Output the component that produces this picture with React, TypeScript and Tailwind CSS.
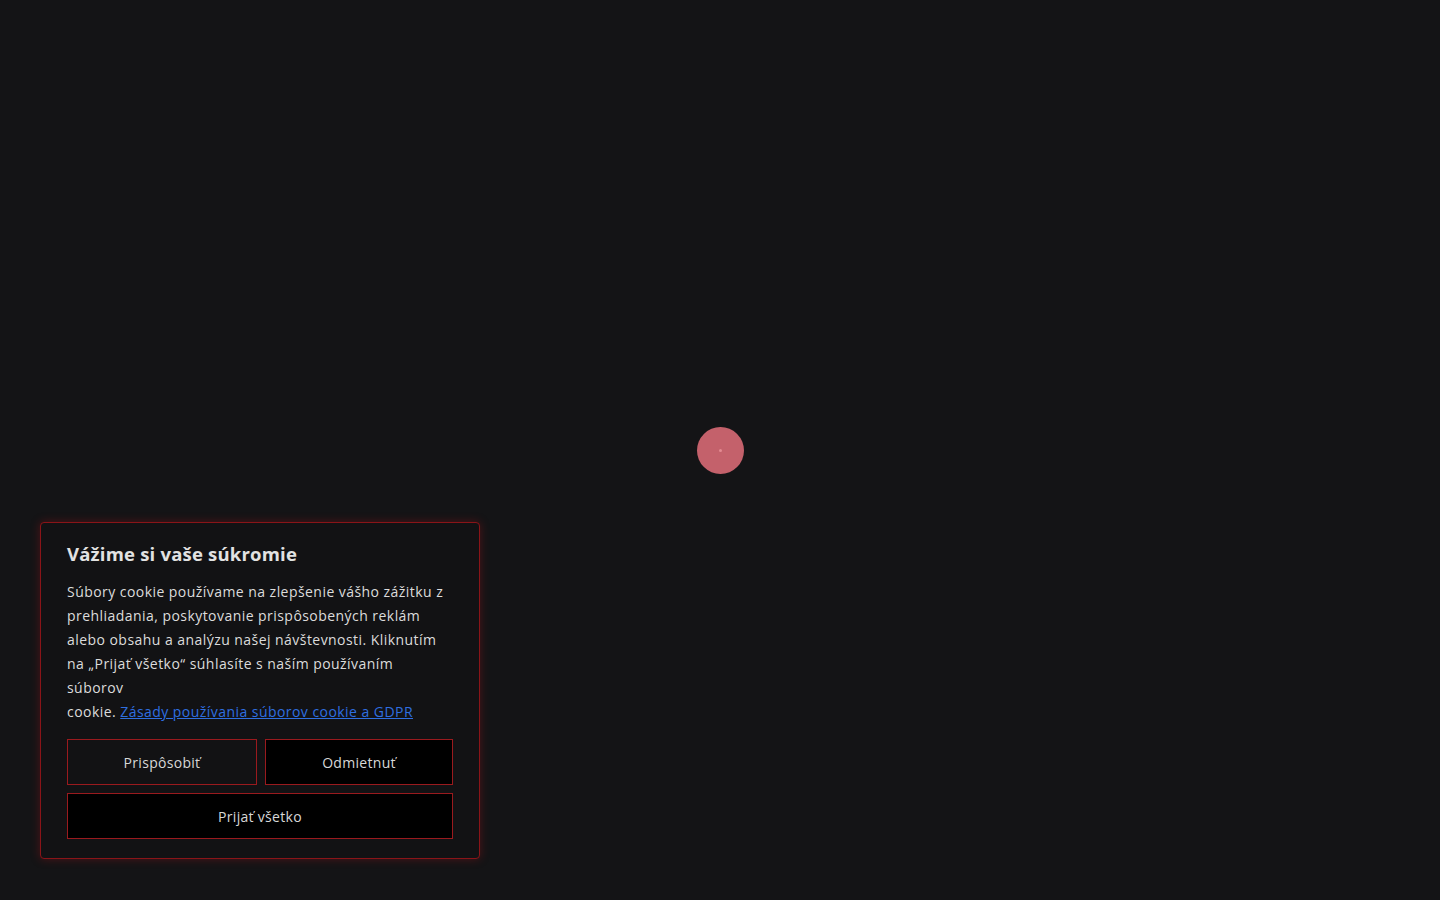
import React from 'react';

const bodyLines = [
  'Súbory cookie používame na zlepšenie vášho zážitku z',
  'prehliadania, poskytovanie prispôsobených reklám',
  'alebo obsahu a analýzu našej návštevnosti. Kliknutím',
  'na „Prijať všetko“ súhlasíte s naším používaním',
  'súborov',
];

function Spinner() {
  return (
    <div className="w-[47px] h-[47px] rounded-full bg-[#c4616b] flex items-center justify-center">
      <div className="w-[3px] h-[3px] rounded-full bg-[#e48a92]" />
    </div>
  );
}

function CookieBanner() {
  return (
    <div className="w-[440px] rounded-[4px] border border-[#8a1418] bg-[#121214] px-[26px] pt-[17px] pb-[19px] shadow-[0_0_10px_rgba(150,20,25,0.45)]">
      <h2 className="text-[18.5px] leading-[28px] font-bold text-[#e2e2e2] tracking-[0.2px]">Vážime si vaše súkromie</h2>
      <p className="mt-[12px] text-[14px] leading-[24px] text-[#dcdcdc] tracking-[0.45px]">
        {bodyLines.map((line) => (
          <span key={line} className="block whitespace-nowrap">
            {line}
          </span>
        ))}
        <span className="block whitespace-nowrap">
          cookie.{' '}
          <a href="#" className="text-[#2f6fe0] underline">
            Zásady používania súborov cookie a GDPR
          </a>
        </span>
      </p>
      <div className="mt-[15px] grid grid-cols-[190px_1fr] gap-[8px]">
        <button className="h-[46px] border border-[#9a1a1e] bg-transparent text-[14px] font-medium tracking-[0.3px] text-[#d8d8d8]">
          Prispôsobiť
        </button>
        <button className="h-[46px] border border-[#9a1a1e] bg-black text-[14px] font-medium tracking-[0.3px] text-[#d8d8d8]">
          Odmietnuť
        </button>
        <button className="col-span-2 h-[46px] border border-[#9a1a1e] bg-black text-[14px] font-medium tracking-[0.3px] text-[#d8d8d8]">
          Prijať všetko
        </button>
      </div>
    </div>
  );
}

export default function App() {
  return (
    <div
      className="relative w-full h-[900px] bg-[#141416] overflow-hidden"
      style={{ fontFamily: '"Open Sans", "Noto Sans", sans-serif' }}
    >
      <div className="h-full flex items-center justify-center">
        <Spinner />
      </div>
      {/* cookie consent sits over the page */}
      <div className="absolute left-[40px] bottom-[41px]">
        <CookieBanner />
      </div>
    </div>
  );
}
